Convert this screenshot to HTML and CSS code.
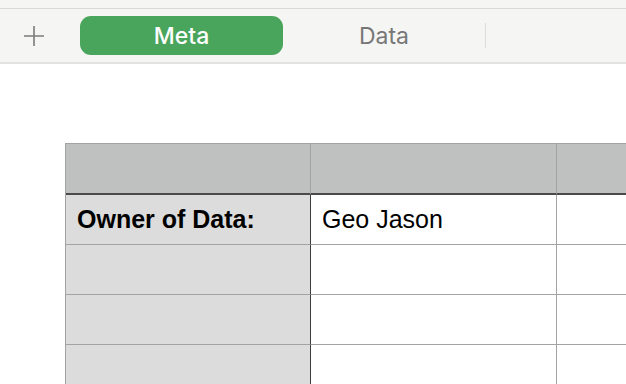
FILE: index.html
```html
<!DOCTYPE html>
<html lang="en">
<head>
    <meta charset="UTF-8">
    <meta name="viewport" content="width=device-width, initial-scale=1.0">
    <title>Sheet - Meta</title>
    <link rel="stylesheet" href="styles.css">
</head>
<body>
    <div class="top-strip"></div>
    <div class="toolbar">
        <button class="add-sheet" aria-label="Add sheet">
            <svg width="22" height="22" viewBox="0 0 22 22">
                <path d="M11 1 V21 M1 11 H21" stroke="#7b7b7b" stroke-width="1.6" fill="none"/>
            </svg>
        </button>
        <div class="tab active">Meta</div>
        <div class="tab">Data</div>
        <div class="tab-sep"></div>
    </div>

    <div class="sheet">
        <div class="cell head first"></div>
        <div class="cell head"></div>
        <div class="cell head last"></div>

        <div class="cell label">Owner of Data:</div>
        <div class="cell">Geo Jason</div>
        <div class="cell last"></div>

        <div class="cell label"></div>
        <div class="cell"></div>
        <div class="cell last"></div>

        <div class="cell label"></div>
        <div class="cell"></div>
        <div class="cell last"></div>

        <div class="cell label"></div>
        <div class="cell"></div>
        <div class="cell last"></div>
    </div>
</body>
</html>
```

FILE: styles.css
```css
html, body {
    margin: 0;
    height: 384px;
    overflow: hidden;
}

body {
    background-color: #fff;
    font-family: "Liberation Sans", Arial, sans-serif;
}

.top-strip {
    height: 8px;
    background-color: #f5f5f3;
    border-bottom: 1px solid #d9d9d9;
}

.toolbar {
    display: flex;
    align-items: center;
    height: 53px;
    background-color: #f5f5f3;
    border-bottom: 2px solid #e3e3e3;
    padding-left: 23px;
}

.add-sheet {
    display: flex;
    padding: 0;
    margin: 0 35px 0 0;
    border: none;
    background: none;
    cursor: pointer;
}

.tab {
    width: 202px;
    height: 39px;
    display: flex;
    align-items: center;
    justify-content: center;
    font-family: Inter, "Noto Sans", sans-serif;
    font-size: 23px;
    color: #777;
    border-radius: 11px;
}

.tab.active {
    width: 203px;
    background-color: #4aa55c;
    color: #fff;
    font-weight: 500;
}

.tab-sep {
    width: 1px;
    height: 25px;
    background-color: #dcdcdc;
}

.sheet {
    display: grid;
    grid-template-columns: 245px 246px 1fr;
    margin: 79px 0 0 65px;
    border-top: 1px solid #a3a3a3;
    border-left: 1px solid #a3a3a3;
}

.cell {
    box-sizing: border-box;
    height: 50px;
    padding: 0 11px;
    display: flex;
    align-items: center;
    font-size: 25px;
    color: #000;
    border-right: 1px solid #a3a3a3;
    border-bottom: 1px solid #a3a3a3;
}

.cell.last {
    border-right: none;
}

.cell.head {
    height: 51px;
    background-color: #bfc1c0;
    border-bottom: 2px solid #4a4a4a;
}

.cell.label {
    background-color: #dcdcdc;
    font-weight: bold;
    border-right-color: #3c3c3c;
}
```
